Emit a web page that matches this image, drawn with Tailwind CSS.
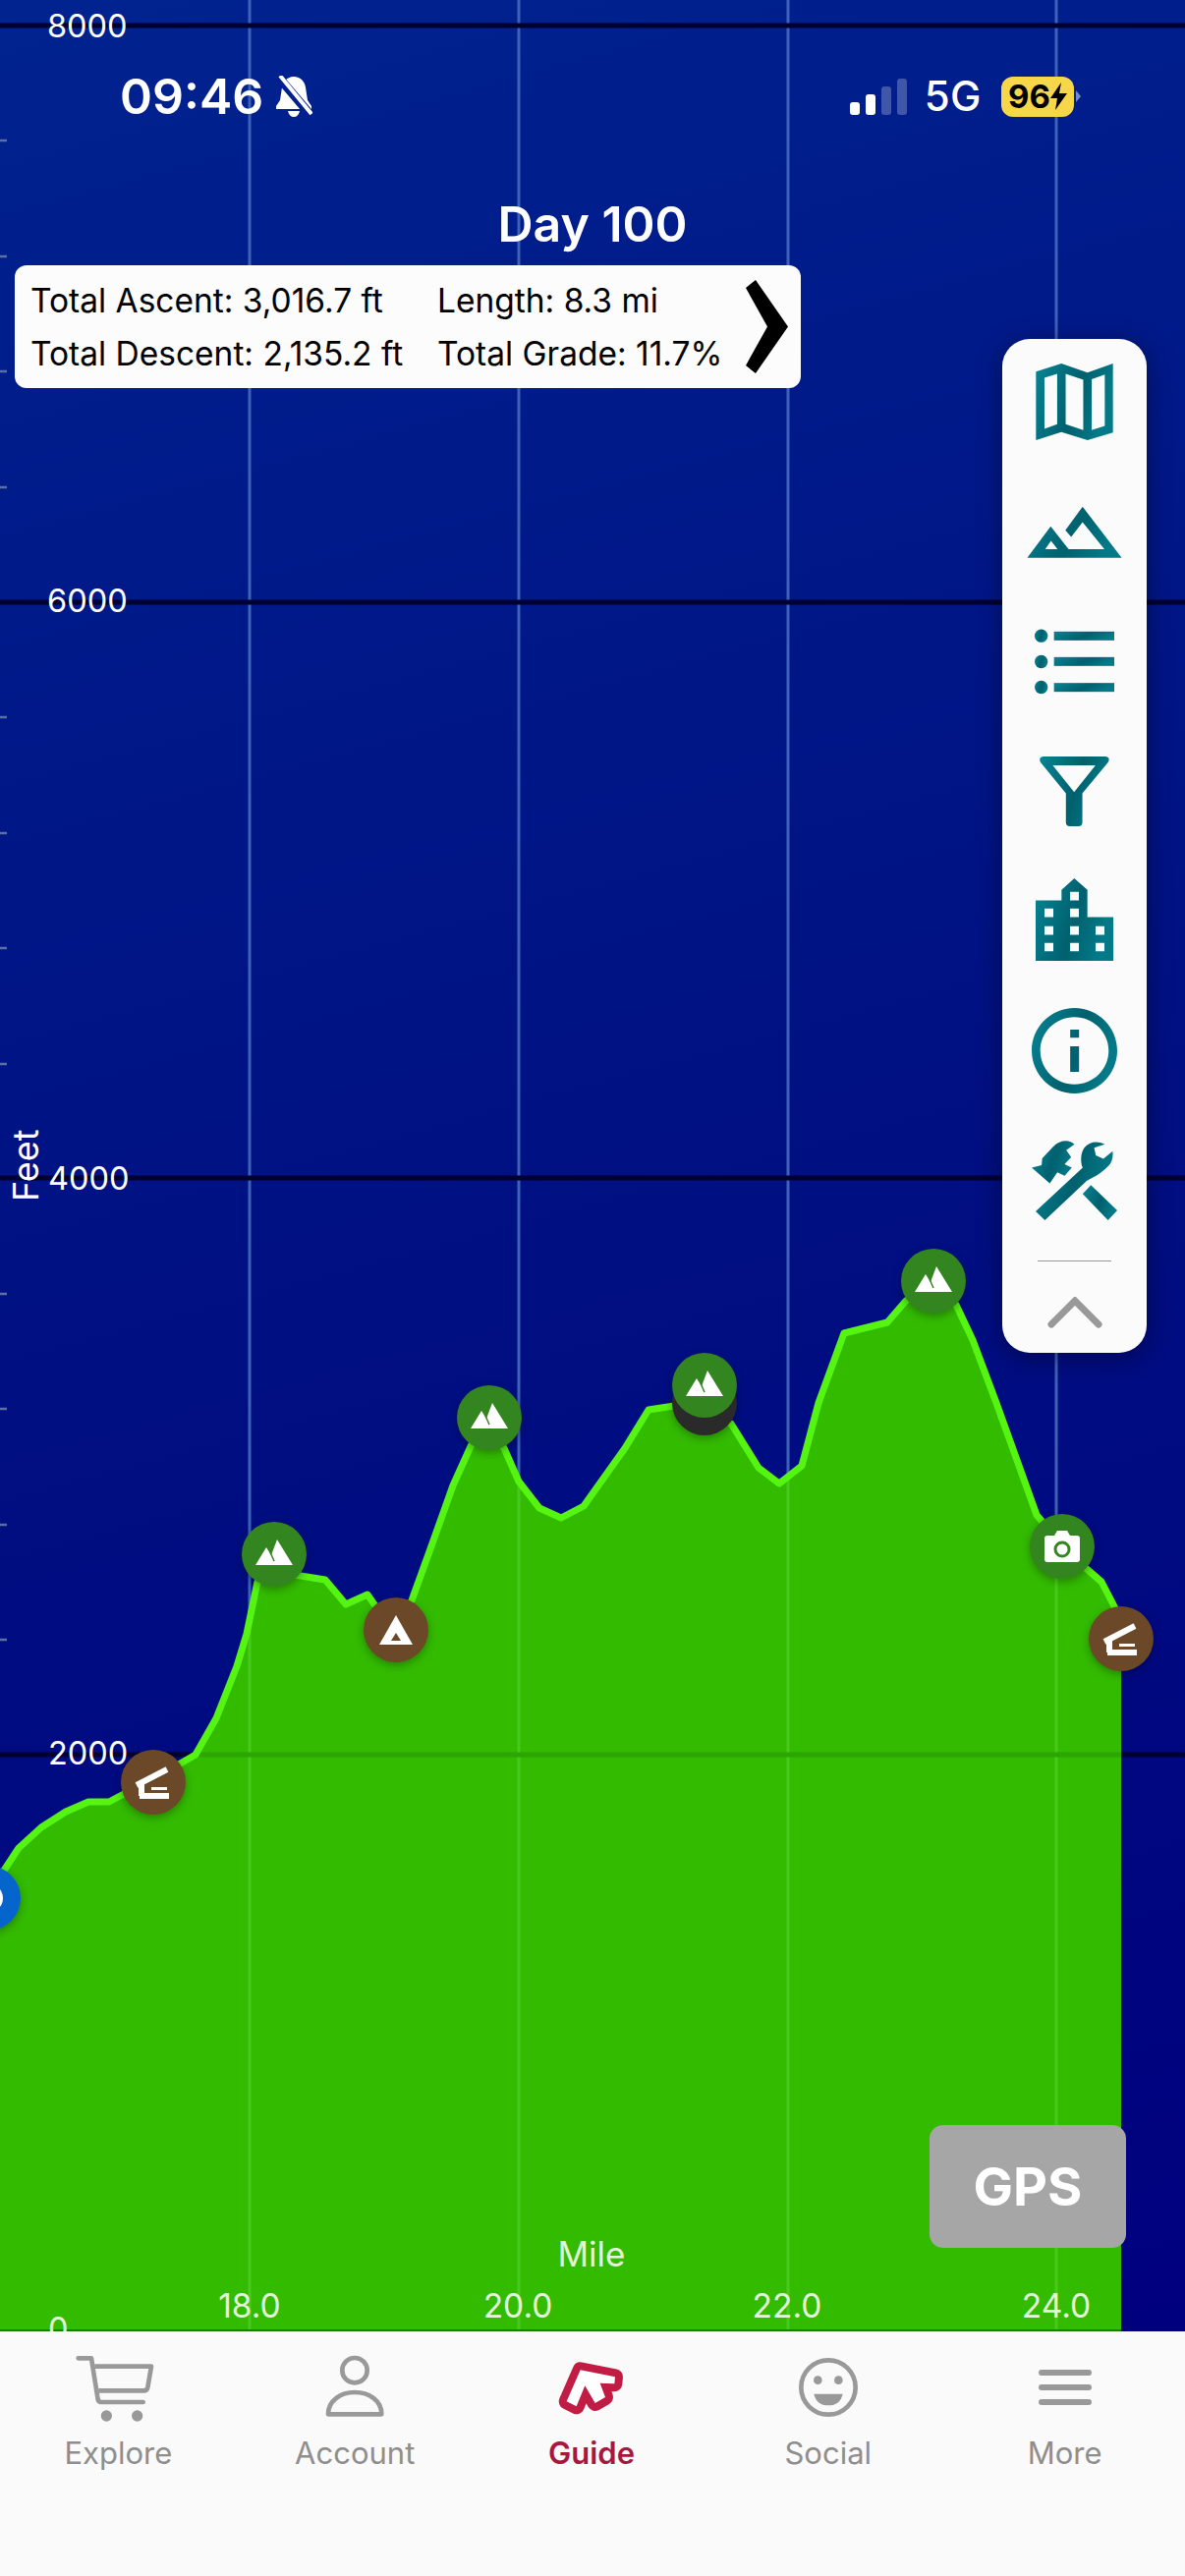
<!DOCTYPE html>
<html lang="en">
<head>
    <meta charset="UTF-8">
    <meta name="viewport" content="width=device-width, initial-scale=1.0">
    <title>Guide - Elevation Profile</title>
    <script src="https://cdn.jsdelivr.net/npm/@tailwindcss/browser@4"></script>
</head>
<body class="bg-[#fafafa]">
<div class="flex flex-col w-[1206px] h-[2622px] overflow-hidden font-['Inter','Noto_Sans',sans-serif]">

    <!-- Chart area -->
    <div class="relative h-[2373px] shrink-0 overflow-hidden bg-[linear-gradient(165deg,#00238f_0%,#001a8a_22%,#000f82_55%,#00007e_100%)]">
        <svg class="absolute inset-0 w-[1206px] h-[2373px]" viewBox="0 0 1206 2373">
            <defs>
                <clipPath id="areaClip">
                    <path d="M0 1910 19 1881 42 1860 67 1844 90 1834 111 1834 126 1826 156 1811 199 1786 220 1749 241 1696 251 1663 262 1610 279 1600 306 1604 331 1608 352 1633 374 1623 383 1636 402 1656 419 1629 440 1571 461 1512 480 1470 497 1445 513 1474 528 1508 549 1535 571 1545 594 1533 636 1474 660 1435 686 1431 718 1439 744 1449 772 1494 793 1510 816 1492 833 1428 859 1357 903 1346 922 1324 950 1303 973 1328 990 1364 1014 1428 1036 1489 1055 1542 1082 1574 1106 1597 1121 1610 1135 1637 1141 1667 1141 2373 0 2373Z"/>
                </clipPath>
                <g id="peak">
                    <circle r="33" fill="#33851f"/>
                    <path d="M-19 11-8-7-3 1 3-15 19 11Z" fill="#fff"/>
                    <path d="M-4-2 0 7" stroke="#33851f" stroke-width="1.5"/>
                </g>
                <g id="hut">
                    <circle r="33" fill="#6b4827"/>
                    <path d="M-17 3 14-13" stroke="#fff" stroke-width="6"/>
                    <path d="M-12 1V14M-14 14H16" stroke="#fff" stroke-width="6" fill="none"/>
                    <path d="M-2 6.500H14" stroke="#fff" stroke-width="3"/>
                </g>
            </defs>

            <!-- grid -->
            <path d="M254 0V2373M528 0V2373M802 0V2373M1075 0V2373" stroke="#3d62b8" stroke-width="3"/>
            <path d="M0 26H1206M0 613H1206M0 1199H1206M0 1786H1206" stroke="#000032" stroke-width="5"/>
            <path d="M0 143H7M0 261H7M0 378H7M0 496H7M0 730H7M0 848H7M0 965H7M0 1083H7M0 1317H7M0 1434H7M0 1552H7M0 1669H7M0 1904H7M0 2021H7M0 2138H7M0 2256H7" stroke="#5a6ea8" stroke-width="2.500"/>

            <!-- elevation -->
            <rect width="1141" height="2373" fill="#33bb00" clip-path="url(#areaClip)"/>
            <g clip-path="url(#areaClip)">
                <path d="M254 0V2373M528 0V2373M802 0V2373M1075 0V2373" stroke="#48c920" stroke-width="3"/>
                <path d="M0 1786H1206" stroke="#2ba602" stroke-width="5"/>
            </g>
            <polyline fill="none" stroke="#55f511" stroke-width="7" stroke-linejoin="round" points="0,1910 19,1881 42,1860 67,1844 90,1834 111,1834 126,1826 156,1811 199,1786 220,1749 241,1696 251,1663 262,1610 279,1600 306,1604 331,1608 352,1633 374,1623 383,1636 402,1656 419,1629 440,1571 461,1512 480,1470 497,1445 513,1474 528,1508 549,1535 571,1545 594,1533 636,1474 660,1435 686,1431 718,1439 744,1449 772,1494 793,1510 816,1492 833,1428 859,1357 903,1346 922,1324 950,1303 973,1328 990,1364 1014,1428 1036,1489 1055,1542 1082,1574 1106,1597 1121,1610 1135,1637 1141,1667"/>
            <path d="M0 2372H1141" stroke="#1f7a00" stroke-width="2"/>

            <!-- axis labels -->
            <g fill="#fff" font-size="32.500">
                <text x="48" y="38">8000</text>
                <text x="48" y="623">6000</text>
                <text x="49" y="1211">4000</text>
                <text x="49" y="1796">2000</text>
                <text x="49" y="2382" fill="#e4f6da">0</text>
                <text transform="translate(39 1223) rotate(-90)" font-size="36">Feet</text>
            </g>
            <g fill="#e4f6da" font-size="33.500" text-anchor="middle">
                <text x="602" y="2307" font-size="35">Mile</text>
                <text x="254" y="2359">18.0</text>
                <text x="527" y="2359">20.0</text>
                <text x="801" y="2359">22.0</text>
                <text x="1075" y="2359">24.0</text>
            </g>

            <!-- markers -->
            <g class="drop-shadow-[0_3px_4px_rgba(0,0,0,0.3)]">
                <g transform="translate(-12 1932)">
                    <circle r="33" fill="#0565cc"/>
                    <circle r="13" fill="none" stroke="#fff" stroke-width="4"/>
                </g>
                <use href="#hut" transform="translate(156 1814)"/>
                <use href="#peak" transform="translate(279 1582)"/>
                <g transform="translate(403 1659)">
                    <circle r="33" fill="#6b4827"/>
                    <path d="M0-15 17 15H-17Z" fill="#fff"/>
                    <path d="M0 3 5 11H-5Z" fill="#6b4827"/>
                </g>
                <use href="#peak" transform="translate(498 1443)"/>
                <circle cx="717" cy="1428" r="33" fill="#2a2a2a"/>
                <use href="#peak" transform="translate(717 1410)"/>
                <use href="#peak" transform="translate(950 1304)"/>
                <g transform="translate(1081 1574)">
                    <circle r="33" fill="#33851f"/>
                    <path d="M-15-11H-8L-5-16H5L8-11H15Q18-11 18-8V13Q18 16 15 16H-15Q-18 16-18 13V-8Q-18-11-15-11Z" fill="#fff"/>
                    <circle cy="3" r="7" fill="#fff" stroke="#33851f" stroke-width="3"/>
                </g>
                <use href="#hut" transform="translate(1141 1668)"/>
            </g>
        </svg>

        <!-- Status bar -->
        <div class="absolute left-[122px] right-[106px] top-[76px] h-[44px] flex items-center justify-between text-white">
            <div class="flex items-center gap-[12px]">
                <span class="text-[50px] leading-none font-semibold">09:46</span>
                <svg class="w-[38px] h-[42px]" viewBox="0 0 38 42">
                    <path d="M19 1C12 1 8 6 7 12L5 25 1 31V34H37V31L33 25 31 12C30 6 26 1 19 1Z" fill="#fff"/>
                    <path d="M13 36H25C24 40 22 42 19 42 16 42 14 40 13 36Z" fill="#fff"/>
                    <path d="M3 1 37 41" stroke="#00208e" stroke-width="9"/>
                    <path d="M5 0 37 39" stroke="#fff" stroke-width="4"/>
                </svg>
            </div>
            <div class="flex items-center">
                <div class="flex items-end gap-[6px] h-[37px] mr-[18px]">
                    <span class="w-[10px] h-[13px] rounded-[3px] bg-white"></span>
                    <span class="w-[10px] h-[21px] rounded-[3px] bg-white"></span>
                    <span class="w-[10px] h-[29px] rounded-[3px] bg-white/25"></span>
                    <span class="w-[10px] h-[37px] rounded-[3px] bg-white/25"></span>
                </div>
                <span class="text-[42px] leading-none font-medium tracking-[0.5px] mr-[20px]">5G</span>
                <div class="flex items-center justify-center w-[74px] h-[41px] rounded-[12px] bg-[#f7d74a] text-black text-[33px] font-bold leading-none">
                    96<svg class="w-[17px] h-[28px]" viewBox="0 0 17 28"><path d="M11 0 0 16H7L5 28 17 11H9Z" fill="#000"/></svg>
                </div>
                <svg class="w-[5px] h-[12px] ml-[2px]" viewBox="0 0 5 12"><path d="M0 0 5 6 0 12Z" fill="#6d8bd0"/></svg>
            </div>
        </div>

        <!-- Title -->
        <h1 class="absolute inset-x-0 top-[200px] text-center text-[50px] leading-[56px] font-semibold text-white">Day 100</h1>

        <!-- Day stats -->
        <div class="absolute left-[15px] top-[270px] w-[800px] h-[125px] flex items-center justify-between pl-[16px] pr-[13px] rounded-[12px] bg-[#fcfcfc] text-black text-[33.5px] leading-[54px]">
            <div class="grid grid-cols-[414px_auto]">
                <span>Total Ascent: 3,016.7 ft</span>
                <span>Length: 8.3 mi</span>
                <span>Total Descent: 2,135.2 ft</span>
                <span>Total Grade: 11.7%</span>
            </div>
            <svg class="w-[43px] h-[95px]" viewBox="0 0 43 95"><path d="M10 0 43 47.500 10 95 0 87 22 47.500 0 8Z" fill="#000"/></svg>
        </div>

        <!-- Side toolbar -->
        <svg class="absolute w-0 h-0">
            <defs>
                <linearGradient id="teal" x1="0" y1="0" x2="1" y2="0.3">
                    <stop offset="0" stop-color="#078494"/>
                    <stop offset="0.6" stop-color="#00606e"/>
                    <stop offset="1" stop-color="#047a88"/>
                </linearGradient>
            </defs>
        </svg>
        <div class="absolute left-[1020px] top-[345px] w-[147px] flex flex-col items-center pt-[25px] pb-[25px] rounded-[28px] bg-[#fbfbfb] shadow-[0_4px_26px_rgba(0,0,0,0.4)]">
            <svg class="w-[79px] h-[78px]" viewBox="162 120 236 235">
                <path fill="url(#teal)" fill-rule="evenodd" d="M162 145 240 120 320 148 398 120V332L320 355 240 330 162 355ZM188 164V320L227 306V152ZM253 152V306L307 324V170ZM333 168V324L373 311V154Z"/>
            </svg>
            <svg class="w-[97px] h-[53px] mt-[67px]" viewBox="135 555 290 160">
                <path fill="url(#teal)" fill-rule="evenodd" d="M135 714 207 618 262 688H372L305 605 270 650 252 630 305 557 425 714ZM190 688H228L208 662Z"/>
            </svg>
            <svg class="w-[81px] h-[67px] mt-[72px]" viewBox="156 930 243 200">
                <g fill="url(#teal)">
                    <circle cx="176" cy="951" r="20"/><circle cx="176" cy="1030" r="20"/><circle cx="176" cy="1108" r="20"/>
                    <rect x="215" y="938" width="184" height="27"/><rect x="215" y="1016" width="184" height="27"/><rect x="215" y="1095" width="184" height="27"/>
                </g>
            </svg>
            <svg class="w-[71px] h-[71px] mt-[63px]" viewBox="175 1320 212 212">
                <path fill="url(#teal)" fill-rule="evenodd" d="M188 1320H374Q392 1322 383 1338L305 1432V1520Q305 1532 293 1532H267Q255 1532 255 1520V1432L178 1338Q170 1322 188 1320ZM215 1347 280 1428 345 1347Z"/>
            </svg>
            <svg class="w-[79px] h-[84px] mt-[53px]" viewBox="162 150 237 234" preserveAspectRatio="none">
                <path fill="url(#teal)" fill-rule="evenodd" d="M162 213H241V183L280 150 320 183V260H399V384H162ZM267 188V213H294V188ZM189 236V260H216V236ZM267 236V260H294V236ZM189 286V310H216V286ZM267 286V310H294V286ZM345 286V310H372V286ZM189 333V357H216V333ZM267 333V357H294V333ZM345 333V357H372V333Z"/>
            </svg>
            <svg class="w-[87px] h-[87px] mt-[48px]" viewBox="150 520 260 245" preserveAspectRatio="none">
                <path fill="url(#teal)" fill-rule="evenodd" d="M280 520C352 520 410 575 410 642 410 710 352 765 280 765 208 765 150 710 150 642 150 575 208 520 280 520ZM280 546C222 546 176 590 176 642 176 696 222 739 280 739 338 739 384 696 384 642 384 590 338 546 280 546ZM267 582H294V605H267ZM267 630H294V703H267Z"/>
            </svg>
            <svg class="w-[87px] h-[82px] mt-[47px]" viewBox="150 895 260 230" preserveAspectRatio="none">
                <g fill="url(#teal)">
                    <path d="M305 1050 330 1025 410 1097 382 1125Z"/>
                    <path d="M162 1100 190 1125 318 1012C345 1000 370 985 388 965 396 955 398 940 396 928L368 950 345 940 340 918 372 908C350 898 325 900 310 918 298 934 298 960 305 975Z"/>
                    <path d="M150 975 180 968 182 948 215 915C235 895 265 893 280 908L255 925 270 945 250 965 272 975 250 998 228 988 205 1020Z"/>
                </g>
            </svg>
            <div class="w-[75px] h-px mt-[41px] bg-[#999]"></div>
            <svg class="w-[56px] h-[32px] mt-[36px]" viewBox="0 0 56 32">
                <path d="M4 28 28 4 52 28" fill="none" stroke="#999" stroke-width="7" stroke-linecap="round" stroke-linejoin="miter"/>
            </svg>
        </div>

        <!-- GPS button -->
        <button class="absolute left-[946px] top-[2163px] w-[200px] h-[125px] rounded-[14px] bg-[#a6a6a6] text-white text-[54px] font-bold">GPS</button>
    </div>

    <!-- Tab bar -->
    <nav class="grid grid-cols-5 flex-1 pt-[22px] pr-[2px] bg-[#fafafa] text-[#8e8e8e] text-[31px] leading-[40px] text-center">
        <div class="flex flex-col items-center">
            <svg class="w-[90px] h-[72px]" viewBox="46 30 270 216">
                <path d="M60 46H100L120 172Q122 180 132 180H258" fill="none" stroke="#999" stroke-width="14" stroke-linecap="round" stroke-linejoin="round"/>
                <path d="M110 71H283L272 135Q270 145 260 145H122" fill="none" stroke="#999" stroke-width="14" stroke-linejoin="round"/>
                <circle cx="146" cy="222" r="17" fill="#999"/><circle cx="240" cy="222" r="17" fill="#999"/>
            </svg>
            <span class="mt-[10px]">Explore</span>
        </div>
        <div class="flex flex-col items-center">
            <svg class="w-[90px] h-[72px]" viewBox="767 30 270 216">
                <circle cx="902" cy="83" r="38" fill="none" stroke="#999" stroke-width="14"/>
                <path d="M821 217C821 175 860 150 902 150 945 150 984 175 984 217Z" fill="none" stroke="#999" stroke-width="14" stroke-linejoin="round"/>
            </svg>
            <span class="mt-[10px]">Account</span>
        </div>
        <div class="flex flex-col items-center">
            <svg class="w-[90px] h-[72px]" viewBox="19 30 270 216">
                <path fill="#fff" stroke="#c01c44" stroke-width="48" stroke-linejoin="round" paint-order="stroke" d="M120 82 226 103 224 124 180 122 196 165 165 183 134 130 108 193 78 178Z"/>
            </svg>
            <span class="mt-[10px] font-semibold text-[#a8173f]">Guide</span>
        </div>
        <div class="flex flex-col items-center">
            <svg class="w-[90px] h-[72px]" viewBox="744 30 270 216">
                <circle cx="879" cy="135" r="83" fill="none" stroke="#999" stroke-width="14"/>
                <circle cx="847" cy="113" r="13" fill="#999"/><circle cx="910" cy="113" r="13" fill="#999"/>
                <path d="M835 155H923Q915 190 879 190 843 190 835 155Z" fill="#999"/>
            </svg>
            <span class="mt-[10px]">Social</span>
        </div>
        <div class="flex flex-col items-center">
            <svg class="w-[90px] h-[72px]" viewBox="0 0 270 216">
                <rect x="54" y="51" width="162" height="18" rx="9" fill="#999"/>
                <rect x="54" y="96" width="162" height="18" rx="9" fill="#999"/>
                <rect x="54" y="141" width="162" height="18" rx="9" fill="#999"/>
            </svg>
            <span class="mt-[10px]">More</span>
        </div>
    </nav>
</div>
</body>
</html>
